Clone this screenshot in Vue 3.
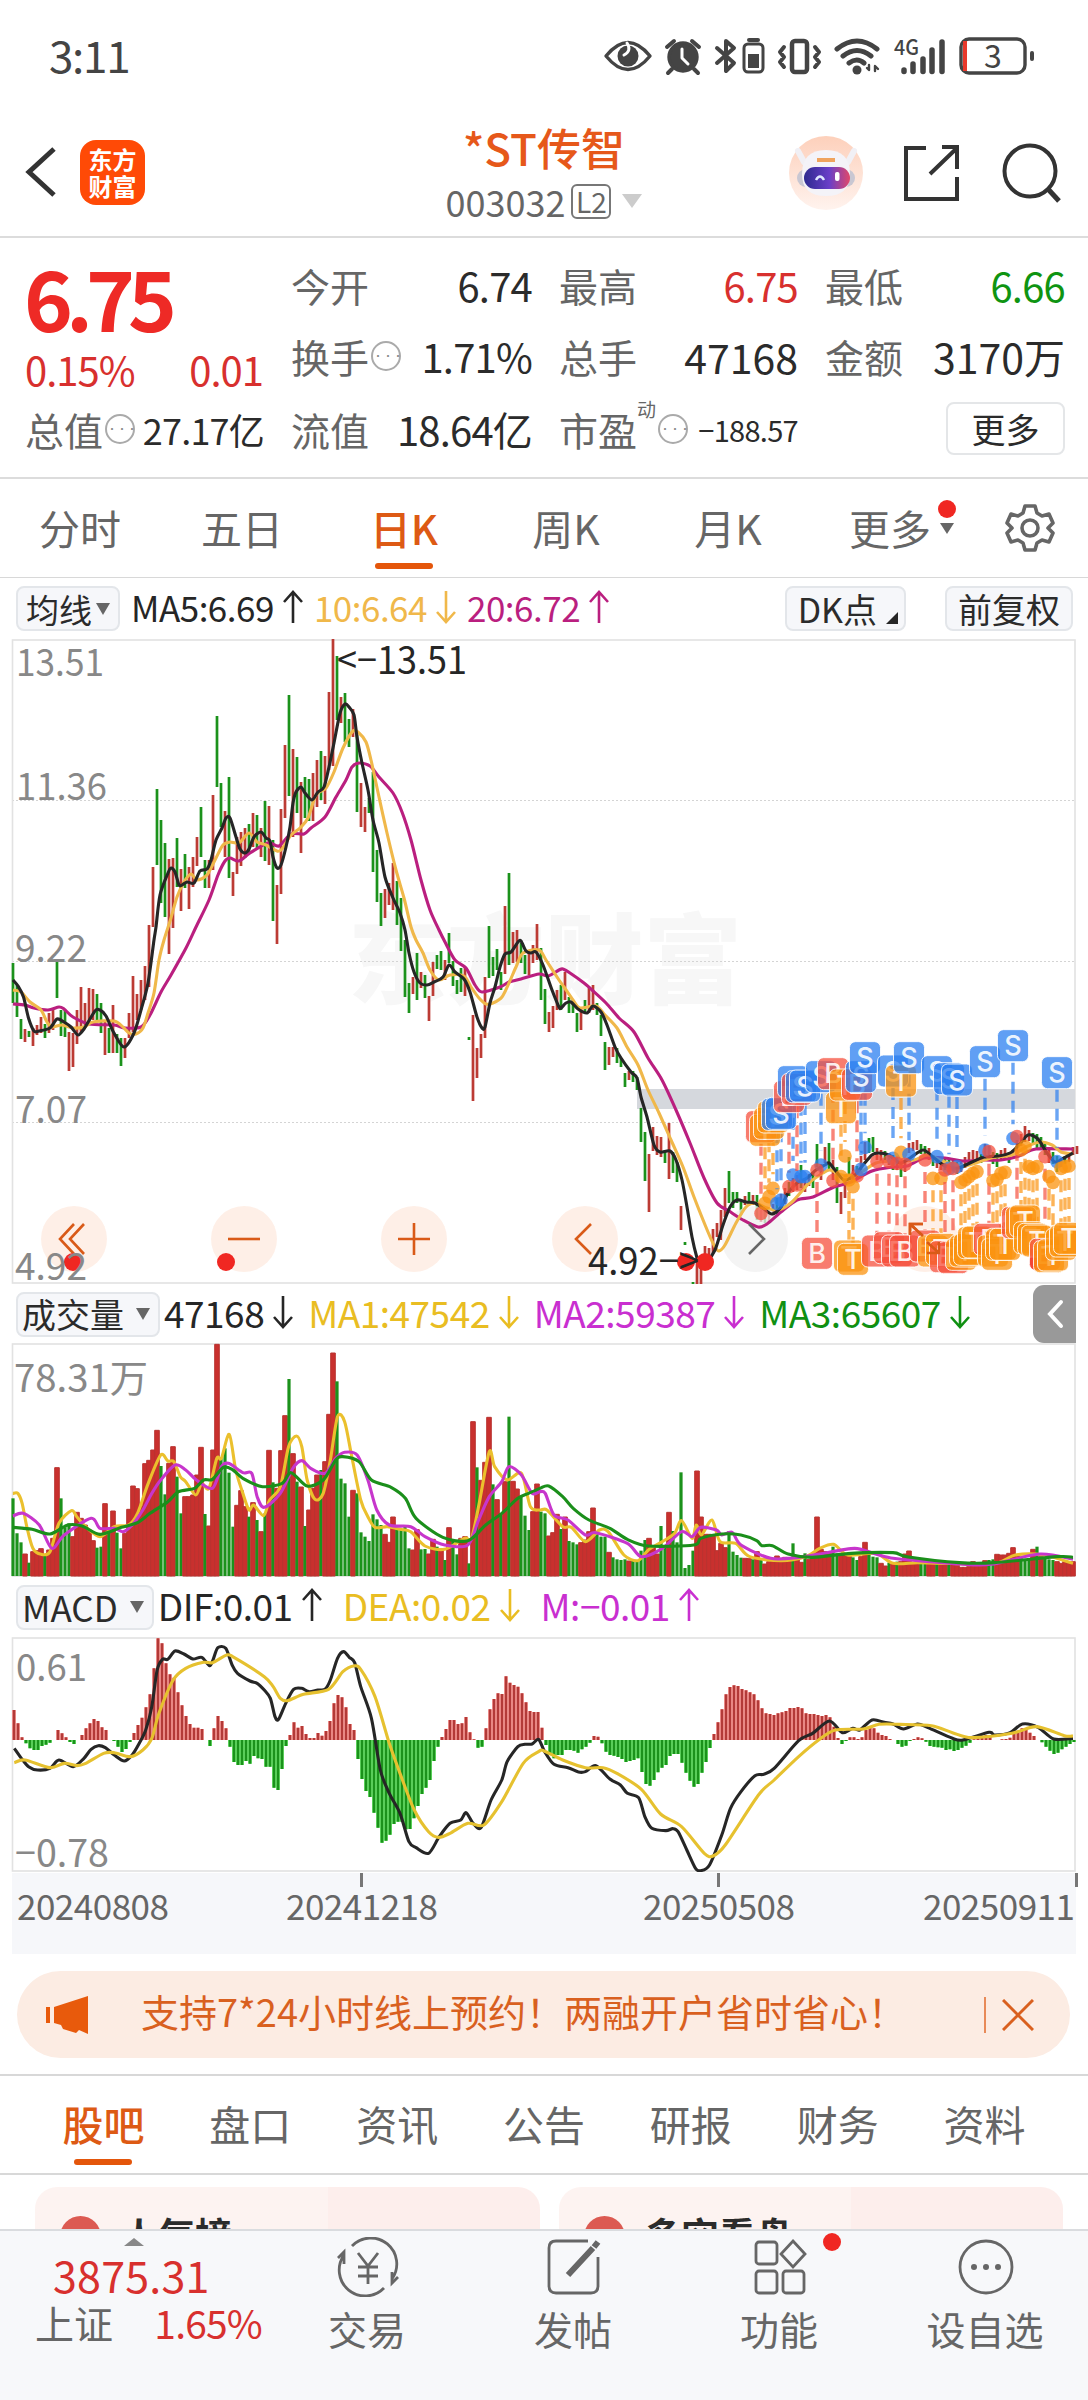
<template>
  <div class="page">
    <header class="status-bar">
      <span class="clock">3:11</span>
      <svg class="status-icons" width="446" height="48" viewBox="600 32 446 48">
        <g fill="none" stroke="#444" stroke-width="3.4" stroke-linecap="round" stroke-linejoin="round">
          <path d="M606 56q22-27 44 0q-22 27-44 0z" />
          <circle cx="628" cy="56" r="10.500" fill="#444" stroke="none" />
          <path d="M627 43q5 8-3 12" stroke="#fff" stroke-width="3" />
          <circle cx="683" cy="57" r="14" fill="#444" />
          <path d="M682 49v9l6 6" stroke="#fff" stroke-width="3" />
          <path d="M667 47l7-6M699 47l-7-6M672 69l-4 4M694 69l4 4" stroke-width="4" />
          <path d="M717 48l17 15-8 8V41l8 7-17 15" stroke-width="4" />
          <rect x="744" y="44" width="19" height="28" rx="4" stroke-width="3" />
          <path d="M749 40h9" stroke-width="4" />
          <rect x="748" y="54" width="11" height="14" fill="#444" stroke="none" />
          <rect x="792" y="41" width="15" height="31" rx="3" stroke-width="4.500" />
          <path d="M784 47l-4 5 4 5-4 5 4 5M815 47l4 5-4 5 4 5-4 5" stroke-width="4" />
          <path d="M837 49q20-16 40 0M843 56q14-11 28 0M849 63q8-6 15 0" stroke-width="5" />
          <circle cx="857" cy="70" r="4.500" fill="#444" stroke="none" />
          <path d="M869 65v5l-2-2M875 71v-5l3 3" stroke-width="2.4" />
          <path d="M904 70v1.500M913 64v7.500M923 59v12.500M932 50v21.500M942 42v29.500" stroke-width="5.500" />
          <rect x="961" y="39" width="64" height="34" rx="8" />
          <path d="M1032 53v6" stroke-width="4" />
        </g>
        <rect x="963" y="41" width="4" height="30" fill="#e8392c" />
        <text x="894" y="55" class="sys" font-size="21" font-weight="500" textLength="25" lengthAdjust="spacingAndGlyphs">4G</text>
        <text x="993" y="68" class="sys" font-size="32" text-anchor="middle">3</text>
      </svg>
    </header>

    <nav class="title-bar">
      <div class="title-left">
        <svg width="32" height="54" viewBox="0 0 32 54">
          <path d="M29 4L4 27l25 23" fill="none" stroke="#333" stroke-width="5" />
        </svg>
        <div class="logo"><span>东方</span><span>财富</span></div>
      </div>
      <div class="title-center">
        <h1>*ST传智</h1>
        <div class="code">003032<em>L2</em><i class="tri grey"></i></div>
      </div>
      <div class="title-right">
        <svg width="74" height="74" viewBox="0 0 74 74">
          <defs>
            <linearGradient id="halo" x1="0" y1="0" x2="0" y2="1">
              <stop offset="0" stop-color="#fdd0bb" />
              <stop offset="1" stop-color="#fff3ee" />
            </linearGradient>
            <linearGradient id="visor" x1="0" y1="0" x2="1" y2="0">
              <stop offset="0" stop-color="#2d2a8f" />
              <stop offset=".55" stop-color="#6a3fc8" />
              <stop offset="1" stop-color="#e0486a" />
            </linearGradient>
          </defs>
          <circle cx="37" cy="37" r="37" fill="url(#halo)" />
          <path d="M9 15l6 11M65 15l-6 11" stroke="#f1f0f5" stroke-width="6" stroke-linecap="round" />
          <rect x="8" y="33" width="58" height="18" rx="9" fill="#c9c7d2" />
          <path d="M13 38q0-24 24-24t24 24q0 22-24 22t-24-22z" fill="#f4f3f8" />
          <path d="M28 24h18" stroke="#efa35e" stroke-width="4" />
          <rect x="15" y="31" width="46" height="22" rx="11" fill="url(#visor)" />
          <path d="M27 44q4-7 8 0" fill="none" stroke="#dfe8ff" stroke-width="2.500" />
          <rect x="46" y="36" width="4.500" height="9" rx="2" fill="#fff" />
        </svg>
        <svg width="60" height="60" viewBox="0 0 60 60">
          <path d="M24 5H4v51h51V34M40 4h15v22M55 5L28 31" fill="none" stroke="#333" stroke-width="4" />
        </svg>
        <svg width="62" height="62" viewBox="0 0 62 62">
          <circle cx="29" cy="29" r="25.500" fill="none" stroke="#333" stroke-width="4" />
          <path d="M47 47l11 12" stroke="#333" stroke-width="5" />
        </svg>
      </div>
    </nav>

    <section class="quote">
      <div class="price-block">
        <strong>6.75</strong>
        <div class="change"><span>0.15%</span><span>0.01</span></div>
      </div>
      <div class="cell"><label>今开</label><b class="tight">6.74</b></div>
      <div class="cell"><label>最高</label><b class="tight up">6.75</b></div>
      <div class="cell"><label>最低</label><b class="tight down">6.66</b></div>
      <div class="cell"><label>换手<i class="more-dot">•••</i></label><b class="tight">1.71%</b></div>
      <div class="cell"><label>总手</label><b>47168</b></div>
      <div class="cell"><label>金额</label><b>3170万</b></div>
      <div class="cell"><label>总值<i class="more-dot">•••</i></label><b class="mid">27.17亿</b></div>
      <div class="cell"><label>流值</label><b class="tight">18.64亿</b></div>
      <div class="cell"><label>市盈<sup>动</sup><i class="more-dot">•••</i></label><b class="small">−188.57</b></div>
      <div class="cell end"><button class="more-btn">更多</button></div>
    </section>

    <nav class="period-tabs">
      <button
        v-for="item in periods"
        :key="item"
        :class="{ active: item === period }"
        @click="period = item"
      >
        {{ item }}<template v-if="item === '更多'"><i class="dot"></i><i class="tri tiny"></i></template>
      </button>
      <span class="gear">
        <svg width="50" height="50" viewBox="0 0 50 50" fill="none" stroke="#666" stroke-width="3.600" stroke-linejoin="round">
          <path d="M20 3h10l2 7 5 3 7-2 4 9-5 5 5 5-4 9-7-2-5 3-2 7H20l-2-7-5-3-7 2-4-9 5-5-5-5 4-9 7 2 5-3z" />
          <circle cx="25" cy="25" r="8" />
        </svg>
      </span>
    </nav>

    <div class="legend-row price-legend">
      <button class="chip">均线<i class="tri"></i></button>
      <span v-for="m in maLegend" :key="m.text" class="legend" :class="m.cls">{{ m.text }}<svg
        class="arrow" :class="{ flip: m.down }" width="20" height="34" viewBox="0 0 20 34"
      ><path d="M10 33V2M1 12l9-10 9 10" /></svg></span>
      <span class="spacer"></span>
      <button class="chip dk">DK点<i class="corner"></i></button>
      <button class="chip adjust">前复权</button>
    </div>

    <svg class="panel" width="1088" height="646" viewBox="0 639 1088 646">
      <defs>
        <clipPath id="plot"><rect x="12" y="639" width="1064" height="646" /></clipPath>
      </defs>
      <text x="348" y="996" class="mark" textLength="394" lengthAdjust="spacingAndGlyphs">东方财富</text>
      <path d="M12 800.500H1075M12 961.500H1075M12 1122.500H1075" stroke="#d4d4d4" stroke-width="1" stroke-dasharray="2 2" />
      <rect x="12.500" y="640" width="1062.500" height="643" class="frame" />
      <rect x="637" y="1089" width="438" height="20" fill="#d5d8dd" />
      <path :d="candlePath('r')" stroke="#bc3b34" stroke-width="2.700" />
      <path :d="candlePath('g')" stroke="#1b921b" stroke-width="2.700" />
      <g v-for="(b, i) in controls" :key="'c' + i">
        <circle :cx="b.x" cy="1239" r="33" :fill="b.off ? '#f0f0f0' : '#fee9df'" fill-opacity=".75" />
      </g>
      <path :d="smooth(ma20)" class="ln" stroke="#ba1f7f" />
      <path :d="smooth(ma10)" class="ln" stroke="#f0b84a" />
      <path :d="smooth(ma5)" class="ln" stroke="#262626" />
      <g v-for="(b, i) in controls" :key="'g' + i">
        <path :d="b.d" fill="none" :stroke="b.off ? '#666' : '#d95a18'" stroke-width="2.600" />
      </g>
      <circle v-for="x in events" :key="x" :cx="x" cy="1262" r="9" fill="#f02722" />
      <g clip-path="url(#plot)">
        <g v-for="(s, i) in signals" :key="'s' + i">
          <path :d="s.line" :stroke="s.color" stroke-width="3.400" stroke-dasharray="12 7" stroke-opacity=".7" />
          <circle :cx="s.x" :cy="s.dot" r="6.800" :fill="s.color" fill-opacity=".75" />
        </g>
        <g v-for="(s, i) in signals" :key="'b' + i">
          <rect :x="s.x - 15.500" :y="s.top" width="31" height="32" rx="6" :fill="s.color" fill-opacity=".75" stroke="#fff" stroke-opacity=".85" stroke-width="1" />
          <text :x="s.x" :y="s.top + 25.500" class="badge">{{ s.kind }}</text>
        </g>
      </g>
      <path :d="controls[5].d" fill="none" stroke="#d95a18" stroke-width="2.600" />
      <g class="scale">
        <text x="16" y="676" textLength="88" lengthAdjust="spacingAndGlyphs">13.51</text>
        <text x="16" y="800" textLength="91" lengthAdjust="spacingAndGlyphs">11.36</text>
        <text x="15" y="962" textLength="72" lengthAdjust="spacingAndGlyphs">9.22</text>
        <text x="15" y="1123" textLength="72" lengthAdjust="spacingAndGlyphs">7.07</text>
        <text x="15" y="1280" textLength="72" lengthAdjust="spacingAndGlyphs">4.92</text>
      </g>
      <g class="peak">
        <text x="337" y="674" textLength="130" lengthAdjust="spacingAndGlyphs">&lt;−13.51</text>
        <text x="588" y="1275" textLength="111" lengthAdjust="spacingAndGlyphs">4.92−&gt;</text>
      </g>
    </svg>

    <div class="legend-row volume-legend">
      <button class="chip wide">成交量<i class="tri"></i></button>
      <span v-for="m in volLegend" :key="m.text" class="legend" :class="m.cls">{{ m.text }}<svg
        class="arrow" :class="{ flip: m.down }" width="20" height="34" viewBox="0 0 20 34"
      ><path d="M10 33V2M1 12l9-10 9 10" /></svg></span>
      <span class="spacer"></span>
      <span class="drawer">
        <svg width="18" height="30" viewBox="0 0 18 30"><path d="M15 3L4 15l11 12" fill="none" stroke="#fff" stroke-width="4" stroke-linecap="round" /></svg>
      </span>
    </div>

    <svg class="panel" width="1088" height="234" viewBox="0 1343 1088 234">
      <rect x="12.500" y="1344" width="1062.500" height="232" class="frame" />
      <path v-for="(v, i) in volumes" :key="i" :d="v.d" :fill="v.up ? '#c9302e' : '#1b921b'" :stroke="v.up ? '#b93431' : 'none'" stroke-width="1" />
      <path :d="smooth(volMa1)" class="ln" stroke="#ebc02d" />
      <path :d="smooth(volMa2)" class="ln" stroke="#c736cc" />
      <path :d="smooth(volMa3)" class="ln" stroke="#1b8f1b" />
      <g class="scale"><text x="14" y="1392" textLength="134" lengthAdjust="spacingAndGlyphs">78.31万</text></g>
    </svg>

    <div class="legend-row macd-legend">
      <button class="chip wide">MACD<i class="tri"></i></button>
      <span v-for="m in macdLegend" :key="m.text" class="legend" :class="m.cls">{{ m.text }}<svg
        class="arrow" :class="{ flip: m.down }" width="20" height="34" viewBox="0 0 20 34"
      ><path d="M10 33V2M1 12l9-10 9 10" /></svg></span>
    </div>

    <svg class="panel" width="1088" height="235" viewBox="0 1637 1088 235">
      <rect x="12.500" y="1638" width="1062.500" height="233" class="frame" />
      <path :d="macdPath(true)" stroke="#ffaaa6" stroke-width="4" />
      <path :d="macdPath(false)" stroke="#74e874" stroke-width="4" />
      <path :d="macdPath(true)" stroke="#b23a38" stroke-width="2.600" />
      <path :d="macdPath(false)" stroke="#1b921b" stroke-width="2.600" />
      <path :d="smooth(dif)" class="ln" stroke="#262626" />
      <path :d="smooth(dea)" class="ln" stroke="#e6c12f" />
      <g class="scale">
        <text x="16" y="1681" textLength="71" lengthAdjust="spacingAndGlyphs">0.61</text>
        <text x="15" y="1867" textLength="94" lengthAdjust="spacingAndGlyphs">−0.78</text>
      </g>
    </svg>

    <div class="dates">
      <span v-for="d in dates" :key="d">{{ d }}</span>
    </div>

    <div class="notice">
      <svg width="46" height="40" viewBox="0 0 46 40" fill="#e85a0c">
        <path d="M1 12h4v16H1zM9 12L43 1v38l-9-4-3 3-13-4-2-4-7-2z" />
      </svg>
      <p>支持7*24小时线上预约！两融开户省时省心！</p>
      <i class="bar"></i>
      <svg width="32" height="32" viewBox="0 0 32 32"><path d="M1 1l30 30M31 1L1 31" stroke="#d9601f" stroke-width="3" /></svg>
    </div>

    <nav class="info-tabs">
      <button v-for="t in infoTabs" :key="t" :class="{ active: t === infoTab }" @click="infoTab = t">{{ t }}</button>
    </nav>

    <div class="cards">
      <div class="card"><i class="badge-icon">T</i><b>人气榜</b><span>›</span></div>
      <div class="card"><i class="badge-icon">VS</i><b>多空看盘</b></div>
    </div>

    <footer class="bottom-bar">
      <div class="index">
        <i class="tri up-tri"></i>
        <b>3875.31</b>
        <p><span>上证</span><em>1.65%</em></p>
      </div>
      <a class="tool">
        <svg viewBox="0 0 64 60">
          <path d="M16 9A26 26 0 0 1 56 42M48 51A26 26 0 0 1 8 18M2 21l6-6v12M62 40l-6 6V35" />
          <path d="M22 16l10 13 10-13M32 29v18M22 30h20M22 39h20" />
        </svg>
        <span>交易</span>
      </a>
      <a class="tool">
        <svg viewBox="0 0 64 60">
          <path d="M46 4H14q-7 0-7 7v38q0 7 7 7h35q7 0 7-7V20" />
          <path d="M56 5l-4 5M51 11L26 38" stroke-width="6" />
        </svg>
        <span>发帖</span>
      </a>
      <a class="tool">
        <svg viewBox="0 0 64 60">
          <rect x="8" y="5" width="21" height="22" rx="3" />
          <rect x="8" y="34" width="21" height="22" rx="3" />
          <rect x="35" y="34" width="21" height="22" rx="3" />
          <path d="M45 4L57 17 45 30 33 17z" />
        </svg>
        <i class="dot"></i>
        <span>功能</span>
      </a>
      <a class="tool">
        <svg viewBox="0 0 64 60">
          <circle cx="32" cy="30" r="26" />
          <g fill="#666" stroke="none"><circle cx="20" cy="30" r="3" /><circle cx="32" cy="30" r="3" /><circle cx="44" cy="30" r="3" /></g>
        </svg>
        <span>设自选</span>
      </a>
    </footer>
  </div>
</template>

<script setup>
import { ref } from 'vue';

const periods = ['分时', '五日', '日K', '周K', '月K', '更多'];
const period = ref('日K');
const infoTabs = ['股吧', '盘口', '资讯', '公告', '研报', '财务', '资料'];
const infoTab = ref('股吧');
const dates = ['20240808', '20241218', '20250508', '20250911'];

const maLegend = [
  { text: 'MA5:6.69', cls: 'k' },
  { text: '10:6.64', cls: 'o', down: true },
  { text: '20:6.72', cls: 'p' },
];
const volLegend = [
  { text: '47168', cls: 'k', down: true },
  { text: 'MA1:47542', cls: 'y', down: true },
  { text: 'MA2:59387', cls: 'm', down: true },
  { text: 'MA3:65607', cls: 'g', down: true },
];
const macdLegend = [
  { text: 'DIF:0.01', cls: 'k' },
  { text: 'DEA:0.02', cls: 'y', down: true },
  { text: 'M:−0.01', cls: 'm' },
];

// one trading day every 4px
const dayX = (i) => 13 + i * 4;

const parse = (s) => s.trim().split(/\s+/).map((p) => p.split(',').map(Number));

// catmull-rom through the points
const smooth = (pts) => {
  let d = `M${pts[0][0]} ${pts[0][1]}`;
  for (let i = 0; i < pts.length - 1; i++) {
    const a = pts[i - 1] || pts[i];
    const b = pts[i];
    const c = pts[i + 1];
    const e = pts[i + 2] || c;
    const k = 7;
    d += `C${b[0] + (c[0] - a[0]) / k} ${b[1] + (c[1] - a[1]) / k} ${c[0] - (e[0] - b[0]) / k} ${c[1] - (e[1] - b[1]) / k} ${c[0]} ${c[1]}`;
  }
  return d;
};

const ma5 = parse(`13,980 18,986 23.5,997 28.5,1018 34,1031 39,1031 50,1028 57,1019 64,1022 71,1027 78,1035 84,1029 95,1011 100,1010 106,1016
114,1033 124,1047 134,1033 141,1010 148,983 154,940 156,927 160,895 168,873 171,868 175,872 179,885 182,885 187,882 194,883 200,871 207,869 211,860
216,840 222,828 226,818 230,818 236,837 240,849 245,853 249,849 254,837 261,832 266,838 270,841 273,857 277,868 281,865 286,847 290,827 293,803 296,792
301,787 305,793 312,800 318,792 324,787 329,767 334,743 340,713 345,704 349,707 354,715 357,737 362,763 368,790 373,820 379,843 385,877 393,898 400,913
405,930 409,953 414,972 420,983 427,985 434,982 443,977 449,965 455,972 464,979 470,992 477,1017 482,1028 485,1027 490,1003 495,987 500,967 505,954
511,952 518,942 521,941 526,951 531,953 536,952 543,965 552,990 559,1007 561,1008 566,1003 571,1002 578,1009 587,1013 593,1006 601,1012 607,1025
615,1047 621,1058 631,1072 637,1078 641,1097 647,1117 654,1145 660,1152 670,1151 676,1160 682,1180 687,1207 692,1237 697,1258 700,1266 706,1263
715,1250 723,1225 730,1207 737,1200 746,1202 755,1203 764,1209 772,1214 781,1207 788,1193 797,1183 807,1178 816,1170 825,1165 829,1163 835,1170
844,1180 855,1175 863,1165 872,1155 878,1153 889,1155 900,1163 910,1158 923,1150 933,1157 945,1166 958,1168 972,1162 984,1157 998,1156 1010,1153
1019,1145 1028,1135 1038,1139 1047,1153 1055,1162 1064,1158 1073,1153`);

const ma10 = parse(`13,990 21,992 30,1002 41,1010 47,1022 52,1027 62,1025 73,1028 84,1027 93,1022 114,1021 123,1027 129,1033 136,1034 143,1028
148,1013 154,993 159,960 164,940 171,918 177,897 184,882 191,874 197,880 207,875 216,858 223,845 230,842 239,843 249,833 257,842 266,845 277,851 282,849
291,835 300,828 308,818 316,795 326,788 334,772 343,748 353,731 359,733 366,742 371,760 379,797 387,833 396,870 404,898 411,927 416,940 423,953 430,970
439,980 450,975 464,976 471,987 479,998 486,1004 493,1003 502,997 509,983 516,967 523,953 539,950 546,960 559,980 564,987 573,1000 580,1008 596,1006
605,1015 617,1028 627,1047 638,1065 648,1090 659,1113 671,1140 683,1167 694,1197 708,1232 715,1247 719,1251 725,1245 736,1223 746,1207 755,1203
767,1208 778,1210 792,1202 809,1183 823,1173 830,1170 842,1175 856,1175 876,1163 893,1161 914,1160 928,1155 945,1162 965,1166 991,1158 1012,1155
1026,1147 1040,1142 1052,1145 1061,1152 1073,1154`);

const ma20 = parse(`13,1004 25,1005 34,1008 48,1010 59,1007 64,1009 73,1017 89,1024 114,1025 125,1028 141,1027 150,1015 161,992 171,975 186,948 196,927
209,900 218,875 225,861 230,858 239,861 250,853 268,843 279,846 291,834 304,834 311,828 325,817 336,797 346,780 352,767 359,763 370,766 379,777 393,793
402,812 411,840 421,880 430,910 439,930 445,942 455,960 466,968 475,985 482,992 500,987 509,982 521,979 539,974 548,976 559,970 563,969 570,973 584,983
592,990 606,1003 619,1018 634,1032 648,1058 662,1080 676,1110 690,1143 704,1178 717,1203 729,1211 743,1220 758,1227 767,1224 781,1212 797,1200 813,1197
834,1187 851,1182 872,1171 893,1167 907,1166 924,1158 945,1158 963,1161 984,1160 1001,1160 1019,1156 1036,1149 1073,1149`);

// high-low span of each day, r = rising, g = falling
const spans = `963-1003g 985-1017g 1019-1039g 1029-1042r 1031-1037g 1028-1046r 1025-1035r 1017-1033r 1024-1038g 1013-1033r 1010-1030r 962-998g 1010-1036g
1010-1037g 1032-1071r 1033-1067r 1010-1044r 987-1033r 1003-1028r 988-1023r 989-1020r 994-1020g 1003-1033g 1020-1055r 1028-1053g 1005-1053r 1034-1053g
1038-1066g 1038-1058r 1013-1038r 976-1032r 994-1020r 980-1010r 966-1000r 925-987r 867-927r 789-865g 820-903g 843-917g 859-954r 858-928r 838-887g 869-911r
854-888g 867-909r 857-887r 837-866r 807-857g 860-888g 860-888r 795-870r 716-787g 783-827g 811-857r 777-878g 872-896r 837-874r 832-866r 828-858r 824-853g
813-847r 815-848g 828-857r 801-861g 806-865r 840-921g 885-944r 809-894r 745-818r 695-796g 749-837r 757-813g 782-853r 777-818g 779-821g 773-821r 760-807r
751-800g 756-804r 692-770r 639-766r 656-720g 697-723r 693-742g 719-747g 709-737r 735-812g 783-827r 807-832r 798-813g 772-872g 850-902g 893-926g 889-918r
883-905r 863-910r 881-925g 898-951g 940-997g 983-1013g 977-994r 953-1000g 972-988r 975-998g 996-1021r 962-996r 955-969g 951-970g 960-980r 933-963g
961-986g 980-994g 968-992g 967-996r 1037-1040g 1015-1101r 1048-1078r 1034-1058r 977-1038r 926-978g 957-976g 949-970g 972-990g 906-974r 873-965g 932-963r
930-962r 943-963g 955-974g 953-975r 945-963r 924-960r 948-1000g 989-1024g 1012-1032r 1006-1028r 990-1010r 985-1010g 972-1000r 997-1013g 1003-1013g
1013-1032g 1008-1030r 1000-1012g 988-1013r 985-1010r 1003-1015g 1015-1036g 1042-1070g 1047-1065r 1047-1057r 1048-1063g 1058-1067g 1073-1087g 1071-1080r
1071-1082g 1077-1090g 1108-1142g 1132-1181g 1154-1212r 1127-1151r 1136-1155r 1137-1157r 1150-1163g 1123-1179r 1152-1173g 1162-1182g 1206-1230r
1242-1245g 1260-1261g 1282-1284g 1258-1284r 1260-1284r 1246-1270r 1248-1263r 1229-1253r 1223-1237r 1210-1240r 1188-1217r 1171-1203g 1192-1208g
1192-1203g 1202-1215g 1196-1205r 1192-1204g 1195-1205r 1195-1220g 1210-1222r 1207-1223g 1210-1222r 1204-1216r 1198-1215g 1194-1208r 1188-1204r
1182-1196g 1178-1192r 1175-1190r 1165-1188g 1178-1192r 1174-1186r 1172-1188g 1144-1167g 1164-1180r 1147-1163r 1143-1170g 1160-1180r 1167-1203g
1192-1214r 1180-1198r 1157-1177g 1165-1182r 1166-1178g 1156-1172r 1142-1160r 1138-1153g 1137-1152g 1148-1160r 1150-1162r 1151-1163g 1153-1165r
1155-1170g 1157-1170r 1163-1177g 1160-1172r 1143-1153r 1142-1151r 1140-1150r 1144-1154g 1146-1158g 1148-1160r 1155-1166g 1158-1168r 1160-1170r
1158-1170g 1159-1172g 1160-1171r 1162-1174g 1162-1172r 1157-1168r 1152-1165r 1150-1162r 1151-1160r 1154-1163g 1144-1158r 1146-1160r 1152-1164g
1153-1167g 1150-1160r 1148-1160r 1152-1163g 1150-1158r 1140-1152r 1134-1146r 1126-1142r 1130-1141r 1133-1145g 1134-1148g 1137-1150g 1143-1155g
1149-1163r 1152-1164g 1156-1172g 1158-1167r 1156-1164g 1154-1162r 1147-1155r 1146-1154r`.trim().split(/\s+/);

const candlePath = (type) =>
  spans
    .map((s, i) => {
      if (!s.endsWith(type)) return '';
      const [top, bottom] = s.slice(0, -1).split('-');
      return `M${dayX(i)} ${top}V${bottom}`;
    })
    .join('');

// volume bar tops, thirds of a pixel below the panel header
const volumeData = `655g 760g 787g 822r 848g 815r 812r 806r 825g 810r 775r 563r 655g 742g 730g 770r 697r 715r 735r 750r 782r 803g 800g 671r 750g 693r 758g
805g 760r 688r 618r 626r 680r 551r 541r 510r 451r 558g 643g 550r 500r 590g 700g 650r 650r 645r 585r 502r 702g 738r 510r 193r 535g 505g 578g 740g 676r
632r 680r 710g 668r 720g 755r 700g 511r 607g 625r 512r 407r 297g 521r 605g 621r 738g 690r 625r 585r 570g 545r 403r 219r 304g 596g 610g 710g 631r 640g
757g 770g 783g 703g 718g 735g 763r 787r 711r 748g 750g 735g 805g 810r 749r 808g 807g 822r 778r 800g 808r 840g 743r 780g 823g 775r 770r 850g 425r 562g
601r 547r 412r 613g 659r 705g 605r 410g 604r 627r 650g 707g 750g 695r 612r 695g 700g 768r 758r 703r 747g 711r 783g 787g 793g 788r 780r 755r 684r 755g
770g 770g 817r 832g 838g 840g 838g 843r 843g 845g 812g 780g 775r 800r 822r 738g 795g 697r 753g 787g 577g 864g 855g 812g 573r 711r 763r 763r 765r 812r
790r 803r 753g 815g 825g 833g 835r 836r 838g 815r 840g 852r 845r 843r 828r 845r 832r 835r 790g 840r 847r 820g 838r 830r 711r 808r 815r 820r 800g 820g
820r 822r 822r 832g 840g 830r 787r 815g 830g 832g 850r 858r 848g 848r 845g 845r 822r 813r 850r 852r 850g 848g 850r 850r 852g 850r 850r 853g 852r 853r
862r 862r 860r 845r 852r 850r 842r 840g 838g 823r 825r 825r 820r 803r 825r 830g 838g 835g 808r 800g 830r 835g 838g 840g 845r 850r 845r 848r 845r`.trim().split(/\s+/);

const volumes = volumeData.map((v, i) => {
  const up = v.endsWith('r');
  const top = 1280 + parseInt(v) / 3;
  const w = up ? 4.6 : 3.2;
  return { up, d: `M${dayX(i) - w / 2} ${top}h${w}V1576h${-w}z` };
});

// left and right halves of the lower panels are kept on their own grids
const join = (left, right, base) => [
  ...parse(left).map(([x, y]) => [x / 2.8, base + y / 3]),
  ...parse(right).map(([x, y]) => [540 + x / 2.861, base + y / 3]),
];

const volMa1 = join(
  `36,640 50,640 62,670 75,740 92,805 115,823 140,815 165,730 200,692 215,710 240,740 280,770 320,740 360,735 385,700 415,610 450,525 470,543 487,545
  505,590 520,605 548,645 565,610 585,625 607,535 620,535 642,463 660,570 680,640 697,690 710,675 738,707 755,660 785,620 808,500 830,468 845,500 860,600
  882,658 905,640 925,540 945,410 965,425 985,530 1010,660 1030,710 1050,742 1085,740 1120,748 1150,755 1190,798 1245,808 1300,775 1320,775 1340,680
  1370,515 1385,560 1420,600 1460,580 1485,680`,
  `0,690 20,690 65,740 90,742 130,785 170,750 195,755 240,825 280,842 310,810 350,785 385,760 405,722 435,775 447,735 462,765 492,720 515,785 560,790
  600,830 690,842 760,830 800,805 840,793 880,825 960,820 1010,850 1080,848 1150,850 1300,850 1360,825 1440,825 1525,850`,
  1280
);
const volMa2 = join(
  `36,708 65,700 110,735 145,805 180,765 255,715 280,745 320,745 345,755 370,735 400,690 425,640 450,600 490,555 520,570 550,600 595,625 620,560 640,550
  680,578 705,580 720,650 740,682 785,640 820,565 845,542 870,565 910,580 940,535 965,517 1000,525 1030,600 1055,690 1090,735 1150,740 1190,770 1245,795
  1310,795 1340,720 1370,650 1405,605 1425,560 1460,585 1490,640`,
  `0,635 15,640 40,705 80,720 130,765 160,758 250,790 290,830 350,805 405,755 435,770 460,742 505,750 520,765 550,757 575,795 660,835 740,832 800,822
  900,805 960,822 1010,835 1060,840 1200,852 1290,853 1430,822 1525,838`,
  1280
);
const volMa3 = join(
  `36,742 90,748 140,762 190,735 230,738 280,763 340,742 385,728 420,700 470,665 500,635 545,625 570,600 595,598 625,562 650,568 680,595 735,620 790,610
  815,578 860,618 905,600 940,540 960,530 1005,545 1040,600 1095,622 1135,655 1165,715 1240,772 1310,782 1360,735 1405,700 1450,655 1480,640`,
  `0,625 25,618 65,650 95,685 140,720 200,745 250,778 310,798 440,795 460,775 520,762 575,765 620,782 635,797 665,797 710,822 780,832 890,820 1010,818
  1050,830 1200,848 1300,848 1480,830 1525,832`,
  1280
);

const macd = `390 430 472 490 505 510 510 498 494 488 480 450 460 472 486 492 480 465 445 430 417 423 442 450 480 483 500 516 507 486 459 435 413 382 343 265
175 190 250 283 293 337 376 408 432 443 443 447 480 498 445 408 423 445 500 546 555 555 543 551 528 535 537 560 560 623 630 567 498 465 427 443 438 462 474
474 459 467 453 423 370 345 352 382 432 450 537 597 633 651 698 743 788 782 764 732 725 725 748 747 715 678 642 623 600 543 500 471 447 420 420 432 430 411
457 478 503 500 445 388 357 340 342 289 308 315 320 340 367 393 396 396 443 495 525 535 525 525 510 510 512 518 508 500 488 468 470 490 515 525 527 531 537
546 543 540 535 576 612 617 600 577 563 555 528 522 522 548 578 602 620 612 578 546 504 462 427 388 343 321 316 318 327 331 337 343 361 385 400 402 405 400
397 393 384 384 381 385 400 402 402 405 408 405 412 440 474 492 483 472 472 477 472 450 442 445 458 465 468 477 480 492 500 497 483 477 472 475 485 498 500
502 503 510 508 513 510 503 497 488 478 475 468 465 466 480 480 478 477 473 462 452 445 448 458 468 480 487 500 512 522 518 508 500 492 486`.trim().split(/\s+/).map(Number);

const macdPath = (up) =>
  macd.map((v, i) => ((v < 480) === up ? `M${dayX(i) + 1} 1740V${1580 + v / 3}` : '')).join('');

const dif = join(
  `40,505 60,535 80,560 105,570 140,565 165,540 205,560 235,535 255,508 275,497 295,503 320,525 348,543 370,525 390,490 408,450 425,380 440,270 455,238
  470,238 490,213 515,222 540,237 565,232 587,257 597,238 610,203 632,205 650,255 665,280 700,303 720,310 740,330 757,355 770,410 780,418 800,370 822,328
  845,325 865,335 890,330 910,328 925,300 945,235 962,215 978,232 993,248 1010,320 1040,415 1065,570 1090,640 1120,700 1145,785 1165,803 1200,820 1230,770
  1260,730 1290,720 1305,698 1325,730 1347,743 1375,660 1405,600 1420,545 1450,500 1470,493 1490,492 1508,478 1525,515`,
  `40,553 80,563 110,576 130,575 160,557 200,597 230,615 250,640 282,653 300,710 320,745 360,752 380,746 395,755 420,810 445,865 460,872 485,855 520,765
  545,685 575,635 615,587 640,583 670,565 740,482 780,460 828,423 865,458 895,445 915,450 950,420 985,427 1010,432 1040,447 1080,432 1110,443 1180,475
  1210,480 1285,457 1300,465 1345,458 1380,432 1425,442 1470,477 1525,475`,
  1580
);
const dea = join(
  `40,548 70,540 140,563 180,550 215,557 240,550 290,520 320,518 365,530 400,510 425,475 445,400 485,300 520,265 570,247 595,248 635,225 655,232 740,290
  765,320 785,355 805,362 850,343 920,328 960,275 990,258 1010,268 1050,350 1090,490 1120,580 1160,690 1200,755 1228,772 1260,760 1310,730 1355,735
  1405,665 1465,550 1508,515`,
  `10,512 65,540 130,563 180,563 220,580 290,628 345,702 405,740 470,820 495,828 530,795 625,645 670,600 740,530 800,478 845,450 925,447 970,433 1030,433
  1120,437 1180,458 1235,473 1350,460 1420,440 1500,467 1525,468`,
  1580
);

const controls = [
  { x: 74, d: 'M74 1224l-14 15 14 15M84 1224l-14 15 14 15' },
  { x: 244, d: 'M228 1239h32' },
  { x: 414, d: 'M398 1239h32M414 1223v32' },
  { x: 585, d: 'M591 1224l-15 15 15 15' },
  { x: 755, off: true, d: 'M749 1224l15 15-15 15' },
  { x: 925, d: 'M910 1235v-11h13M910 1224l13 12M939 1242v11h-12M927 1242l12 11' },
];
const events = [73, 226, 686, 705, 1038];

// kind, x, badge top, marker y (grid of 3 per pixel)
const colors = { S: '#2b7ff0', B: '#f5503e', T: '#fb930f' };
const signals = `B,93,272,580 T,105,283,550 T,117,262,530 T,129,243,505 S,141,235,550 S,153,232,540 B,177,182,500 S,189,137,465 B,201,160,495 S,213,152,470
S,225,150,470 S,273,122,435 B,309,113,482 T,333,215,470 T,345,147,408 B,381,145,468 S,393,122,448 S,405,65,382 S,489,105,415 T,513,135,397 S,537,65,403
S,621,107,410 S,657,128,445 S,681,132,440 S,765,77,390 S,849,29,355 S,981,110,425
B,261,652,450 T,357,660,480 T,369,670,500 B,441,645,425 B,477,635,425 B,501,645,430 B,525,645,433 B,585,630,420 T,609,645,475 T,633,640,475 B,645,662,450
B,669,665,445 T,693,655,487 T,705,645,480 T,717,640,470 T,729,620,460 T,741,618,455 B,777,610,395 T,789,645,482 T,801,655,478 T,813,625,460 T,825,625,457
B,861,560,350 T,873,560,390 T,885,555,380 T,897,605,440 T,909,610,445 T,921,615,440 B,945,655,410 T,957,662,470 T,969,657,487 T,993,625,445 T,1005,615,440
T,1017,607,438`.trim().split(/\s+/).map((s) => {
  const [kind, px, pt, pd] = s.split(',');
  const x = 730 + px / 3;
  const top = 1020 + pt / 3;
  const dot = 1020 + pd / 3;
  const line = dot > top ? `M${x} ${top + 33}V${dot - 14}` : `M${x} ${dot + 12}V${top}`;
  return { kind, x, top, dot, line, color: colors[kind] };
});
</script>

<style>
body {
  margin: 0;
  background: #fff;
}
</style>

<style scoped>
.page {
  width: 1088px;
  height: 2400px;
  overflow: hidden;
  display: flex;
  flex-direction: column;
  background: #fff;
  color: #2b2b2b;
  font-family: 'Noto Sans CJK SC', 'Noto Sans', sans-serif;
}

.page > * {
  flex-shrink: 0;
  box-sizing: border-box;
}

button {
  font: inherit;
  color: inherit;
  background: none;
  border: none;
  padding: 0;
}

i,
em {
  font-style: normal;
}

.status-bar {
  height: 114px;
  padding: 0 42px 0 49px;
  display: flex;
  align-items: center;
  justify-content: space-between;
}

.clock {
  font-size: 44px;
  line-height: 48px;
  letter-spacing: -1.3px;
  padding-bottom: 6px;
  color: #444;
}

.status-icons {
  margin-bottom: 2px;
}

.sys {
  fill: #444;
}

.title-bar {
  height: 124px;
  display: grid;
  grid-template-columns: 1fr auto 1fr;
  align-items: center;
  border-bottom: 2px solid #dcdcdc;
}

.title-left {
  display: flex;
  align-items: center;
  gap: 23px;
  padding: 0 0 6px 25px;
}

.logo {
  width: 65px;
  height: 65px;
  border-radius: 16px;
  background: #ff4a06;
  color: #fff;
  display: flex;
  flex-direction: column;
  align-items: center;
  justify-content: center;
  font-size: 24px;
  font-weight: 700;
  line-height: 27px;
}

.title-center {
  margin-top: -4px;
}

.title-center h1 {
  margin: 0;
  font-size: 44px;
  line-height: 56px;
  font-weight: 500;
  color: #e6581a;
  text-align: center;
}

.code {
  display: flex;
  align-items: center;
  font-size: 36px;
  line-height: 52px;
  color: #666;
}

.code em {
  margin-left: 6px;
  border: 2px solid #777;
  border-radius: 6px;
  width: 36px;
  height: 31px;
  line-height: 30px;
  font-size: 28px;
  text-align: center;
}

.tri {
  display: inline-block;
  border: 7px solid transparent;
  border-top: 12px solid #666;
  border-bottom: 0;
}

.tri.grey {
  margin-left: 11px;
  border-width: 14px 10px 0;
  border-top-color: #ccc;
}

.title-right {
  display: flex;
  align-items: center;
  justify-content: flex-end;
  gap: 39px;
  padding: 0 25px 5px 0;
}

.quote {
  height: 241px;
  padding: 13px 24px 0 25px;
  display: grid;
  grid-template-columns: 239px 241px 239px 240px;
  grid-template-rows: 68px 73px 73px;
  column-gap: 27px;
  border-bottom: 2px solid #dcdcdc;
}

.price-block {
  grid-row: span 2;
  color: #ee2a26;
}

.price-block strong {
  display: block;
  margin: 0 0 0 -1px;
  font-size: 83px;
  line-height: 90px;
  letter-spacing: -7px;
}

.change {
  display: flex;
  justify-content: space-between;
  padding-right: 1px;
  font-size: 40px;
  line-height: 56px;
  letter-spacing: -1px;
  color: #d8302e;
}

.cell {
  display: flex;
  align-items: center;
  justify-content: space-between;
  font-size: 39px;
  line-height: 60px;
  white-space: nowrap;
}

.cell.end {
  justify-content: flex-end;
}

.cell label {
  color: #666;
  display: flex;
  align-items: center;
}

.cell b {
  font-size: 41px;
  font-weight: 400;
}

.cell b.tight {
  font-size: 40px;
  letter-spacing: -0.8px;
}

.cell b.mid {
  font-size: 36px;
  letter-spacing: -0.8px;
}

.cell b.small {
  font-size: 29px;
  letter-spacing: -0.7px;
}

.cell b.up {
  color: #d8302e;
}

.cell b.down {
  color: #0f9412;
}

.cell sup {
  font-size: 19px;
  line-height: 20px;
  align-self: flex-start;
}

.more-dot {
  width: 26px;
  height: 26px;
  margin-left: 2px;
  border: 2px solid #aaa;
  border-radius: 50%;
  font-size: 10px;
  line-height: 25px;
  text-align: center;
  color: #888;
}

.more-btn {
  width: 119px;
  height: 53px;
  border: 2px solid #e4e6e8;
  border-radius: 8px;
  font-size: 34px;
  line-height: 44px;
}

.period-tabs {
  height: 99px;
  display: flex;
  border-bottom: 1px solid #d8d8d8;
  color: #666;
  font-size: 41px;
}

.period-tabs button {
  width: 162px;
  position: relative;
  left: -1px;
  line-height: 60px;
  padding-bottom: 3px;
}

.active {
  color: #dd5a14;
  font-weight: 500;
}

.active::after {
  content: '';
  position: absolute;
  left: 50%;
  bottom: 8px;
  width: 58px;
  height: 6px;
  margin-left: -29px;
  border-radius: 3px;
  background: #e4560b;
}

.dot {
  position: absolute;
  width: 18px;
  height: 18px;
  border-radius: 50%;
  background: #f02722;
}

.period-tabs .dot {
  left: 129px;
  top: 21px;
}

.tri.tiny {
  position: absolute;
  left: 131px;
  top: 44px;
  border-width: 11px 7px 0;
}

.gear {
  flex: 1;
  display: flex;
  align-items: center;
  justify-content: center;
}

.legend-row {
  display: flex;
  align-items: center;
  font-size: 35px;
  line-height: 44px;
  padding-left: 16px;
}

.price-legend {
  height: 61px;
  padding-right: 15px;
}

.volume-legend {
  height: 58px;
}

.macd-legend {
  height: 60px;
}

.chip {
  box-sizing: border-box;
  height: 45px;
  border: 2px solid #e3e6ea;
  border-radius: 8px;
  background: #f6f7fa;
  padding: 0 8px;
  font-size: 33px;
  line-height: 38px;
  display: flex;
  align-items: center;
  gap: 4px;
  white-space: nowrap;
}

.chip.wide {
  padding: 0 8px 0 4px;
  font-size: 34px;
  gap: 12px;
}

.macd-legend .chip.wide {
  font-size: 35px;
}

.dk {
  margin-right: 39px;
  padding: 0 6px 0 11px;
  font-size: 34px;
  gap: 9px;
}

.adjust {
  padding: 0 11px;
  font-size: 34px;
}

.corner {
  align-self: flex-end;
  margin-bottom: 5px;
  border-left: 12px solid transparent;
  border-bottom: 12px solid #262626;
}

.spacer {
  flex: 1;
}

.legend {
  display: flex;
  align-items: center;
  letter-spacing: -0.5px;
  margin-left: 11px;
  position: relative;
  top: -2px;
}

.arrow {
  margin-left: 9px;
  fill: none;
  stroke: currentColor;
  stroke-width: 2.6;
}

.flip {
  transform: rotate(180deg);
}

.volume-legend .legend,
.macd-legend .legend {
  margin-left: 15px;
  font-size: 37px;
  letter-spacing: -0.5px;
}

.macd-legend .legend {
  margin-left: 21px;
}

.volume-legend .chip + .legend,
.macd-legend .chip + .legend {
  margin-left: 4px;
}

.k { color: #262626; }
.o { color: #f0b84a; }
.p { color: #ba1f7f; }
.y { color: #e9bd22; }
.m { color: #c92fd0; }
.g { color: #109012; }

.drawer {
  width: 43px;
  height: 58px;
  margin-right: 12px;
  border-radius: 11px 0 0 11px;
  background: #999;
  display: flex;
  align-items: center;
  justify-content: center;
}

.panel {
  display: block;
}

.frame {
  fill: none;
  stroke: #e2e2e2;
  stroke-width: 1.6;
}

.ln {
  fill: none;
  stroke-width: 3.1;
  stroke-linejoin: round;
}

.mark {
  font-size: 98px;
  font-weight: 900;
  fill: #f7f7f7;
}

.scale text {
  font-size: 38px;
  fill: #888;
}

.peak text {
  font-size: 38px;
  fill: #262626;
}

.badge {
  font-family: 'Inter', 'Liberation Sans', sans-serif;
  font-size: 27px;
  font-weight: 500;
  text-anchor: middle;
  fill: #fff;
  fill-opacity: 0.9;
}

.dates {
  margin: 1px 12px 0;
  height: 81px;
  padding: 0 4px 0 5px;
  display: grid;
  grid-template-columns: 269px 357px 280px 1fr;
  align-items: center;
  background: #f6f7fa;
  font-size: 35px;
  line-height: 44px;
  letter-spacing: -0.5px;
  color: #666;
}

.dates span {
  position: relative;
  padding-bottom: 17px;
}

.dates span:not(:first-child)::before {
  content: '';
  position: absolute;
  left: 74px;
  top: -10px;
  width: 3px;
  height: 14px;
  background: #777;
}

.dates span:last-child::before {
  left: auto;
  right: -4px;
}

.notice {
  margin: 17px 18px 16px 17px;
  height: 87px;
  padding: 0 36px 0 28px;
  border-radius: 44px;
  background: #fcece3;
  display: flex;
  align-items: center;
}

.notice p {
  flex: 1;
  margin: 0 0 8px 50px;
  font-size: 38px;
  line-height: 56px;
  color: #d9601f;
}

.bar {
  width: 2px;
  height: 36px;
  margin-right: 16px;
  background: #e88a58;
}

.info-tabs {
  height: 101px;
  padding: 0 30px;
  display: flex;
  border-top: 2px solid #d8d8d8;
  border-bottom: 2px solid #d8d8d8;
  color: #666;
  font-size: 41px;
}

.info-tabs button {
  flex: 1;
  position: relative;
  line-height: 60px;
  padding-bottom: 4px;
}

.cards {
  height: 54px;
  padding: 12px 25px 0 35px;
  display: flex;
  gap: 19px;
  overflow: hidden;
}

.card {
  flex: 1;
  height: 98px;
  border-radius: 22px;
  background: linear-gradient(90deg, #fdf3f1 58%, #fdeeec 58%);
  display: flex;
  align-items: center;
  font-size: 37px;
  color: #2b2b2b;
}

.card b {
  margin: -4px 0 0 20px;
}

.card span {
  margin-left: 12px;
  color: #888;
}

.badge-icon {
  width: 41px;
  height: 41px;
  margin-left: 25px;
  border-radius: 50%;
  background: #dc5a52;
  color: #fff;
  font-size: 20px;
  font-weight: 700;
  line-height: 40px;
  text-align: center;
}

.bottom-bar {
  flex: 1;
  display: grid;
  grid-template-columns: 264px repeat(4, 206px);
  background: #f7f8fa;
  border-top: 2px solid #dadcdf;
}

.index {
  display: flex;
  flex-direction: column;
  padding-left: 35px;
}

.index b {
  margin-left: 18px;
  font-size: 43px;
  line-height: 52px;
  font-weight: 400;
  letter-spacing: 0.2px;
  color: #d8302e;
}

.index p {
  margin: -1px 0 0;
  display: flex;
  justify-content: space-between;
  width: 227px;
  font-size: 39px;
  line-height: 46px;
  color: #666;
}

.index em {
  color: #d8302e;
  letter-spacing: -0.8px;
}

.up-tri {
  align-self: flex-start;
  margin: 7px 0 2px 89px;
  border-width: 0 10px 8px;
  border-bottom: 8px solid #888;
  border-top: 0;
}

.tool {
  position: relative;
  display: flex;
  flex-direction: column;
  align-items: center;
  font-size: 39px;
  line-height: 56px;
  color: #666;
}

.tool svg {
  width: 64px;
  height: 60px;
  margin: 6px 0 3px 2px;
  fill: none;
  stroke: #666;
  stroke-width: 2.8;
}

.tool .dot {
  left: 147px;
  top: 2px;
}
</style>
